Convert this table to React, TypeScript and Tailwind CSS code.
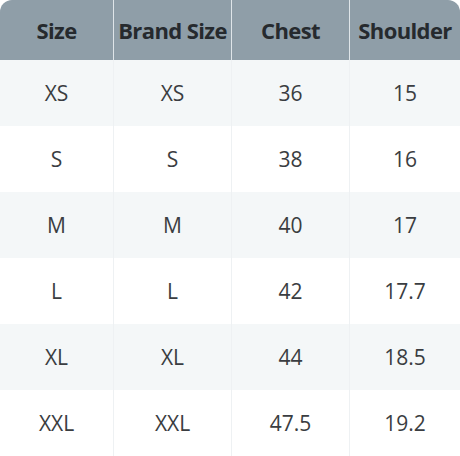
const headers = ["Size", "Brand Size", "Chest", "Shoulder"];

const rows = [
  ["XS", "XS", "36", "15"],
  ["S", "S", "38", "16"],
  ["M", "M", "40", "17"],
  ["L", "L", "42", "17.7"],
  ["XL", "XL", "44", "18.5"],
  ["XXL", "XXL", "47.5", "19.2"],
];

export default function App() {
  return (
    <div className="w-[460px] h-[456px] bg-white overflow-hidden" style={{ fontFamily: "'Open Sans', Lato, sans-serif" }}>
      <div className="rounded-[12px] overflow-hidden">
        {/* header */}
        <div className="grid grid-cols-[114px_118px_118px_110px] h-[60px] bg-[#8f9ea8]">
          {headers.map((h, i) => (
            <div
              key={h}
              className={`flex items-center justify-center text-[22px] font-bold text-[#262a2e] tracking-[-0.6px] whitespace-nowrap ${i < 3 ? "border-r border-[#dfe5e9]" : ""}`}
            >
              {h}
            </div>
          ))}
        </div>

        {/* body */}
        {rows.map((r, ri) => (
          <div
            key={ri}
            className={`grid grid-cols-[114px_118px_118px_110px] h-[66px] ${ri % 2 === 0 ? "bg-[#f4f7f8]" : "bg-white"}`}
          >
            {r.map((c, ci) => (
              <div
                key={ci}
                className={`flex items-center justify-center pt-px text-[21px] font-normal text-[#3a3d41] ${ci < 3 ? "border-r border-[#eef1f3]" : ""}`}
              >
                {c}
              </div>
            ))}
          </div>
        ))}
      </div>
    </div>
  );
}
